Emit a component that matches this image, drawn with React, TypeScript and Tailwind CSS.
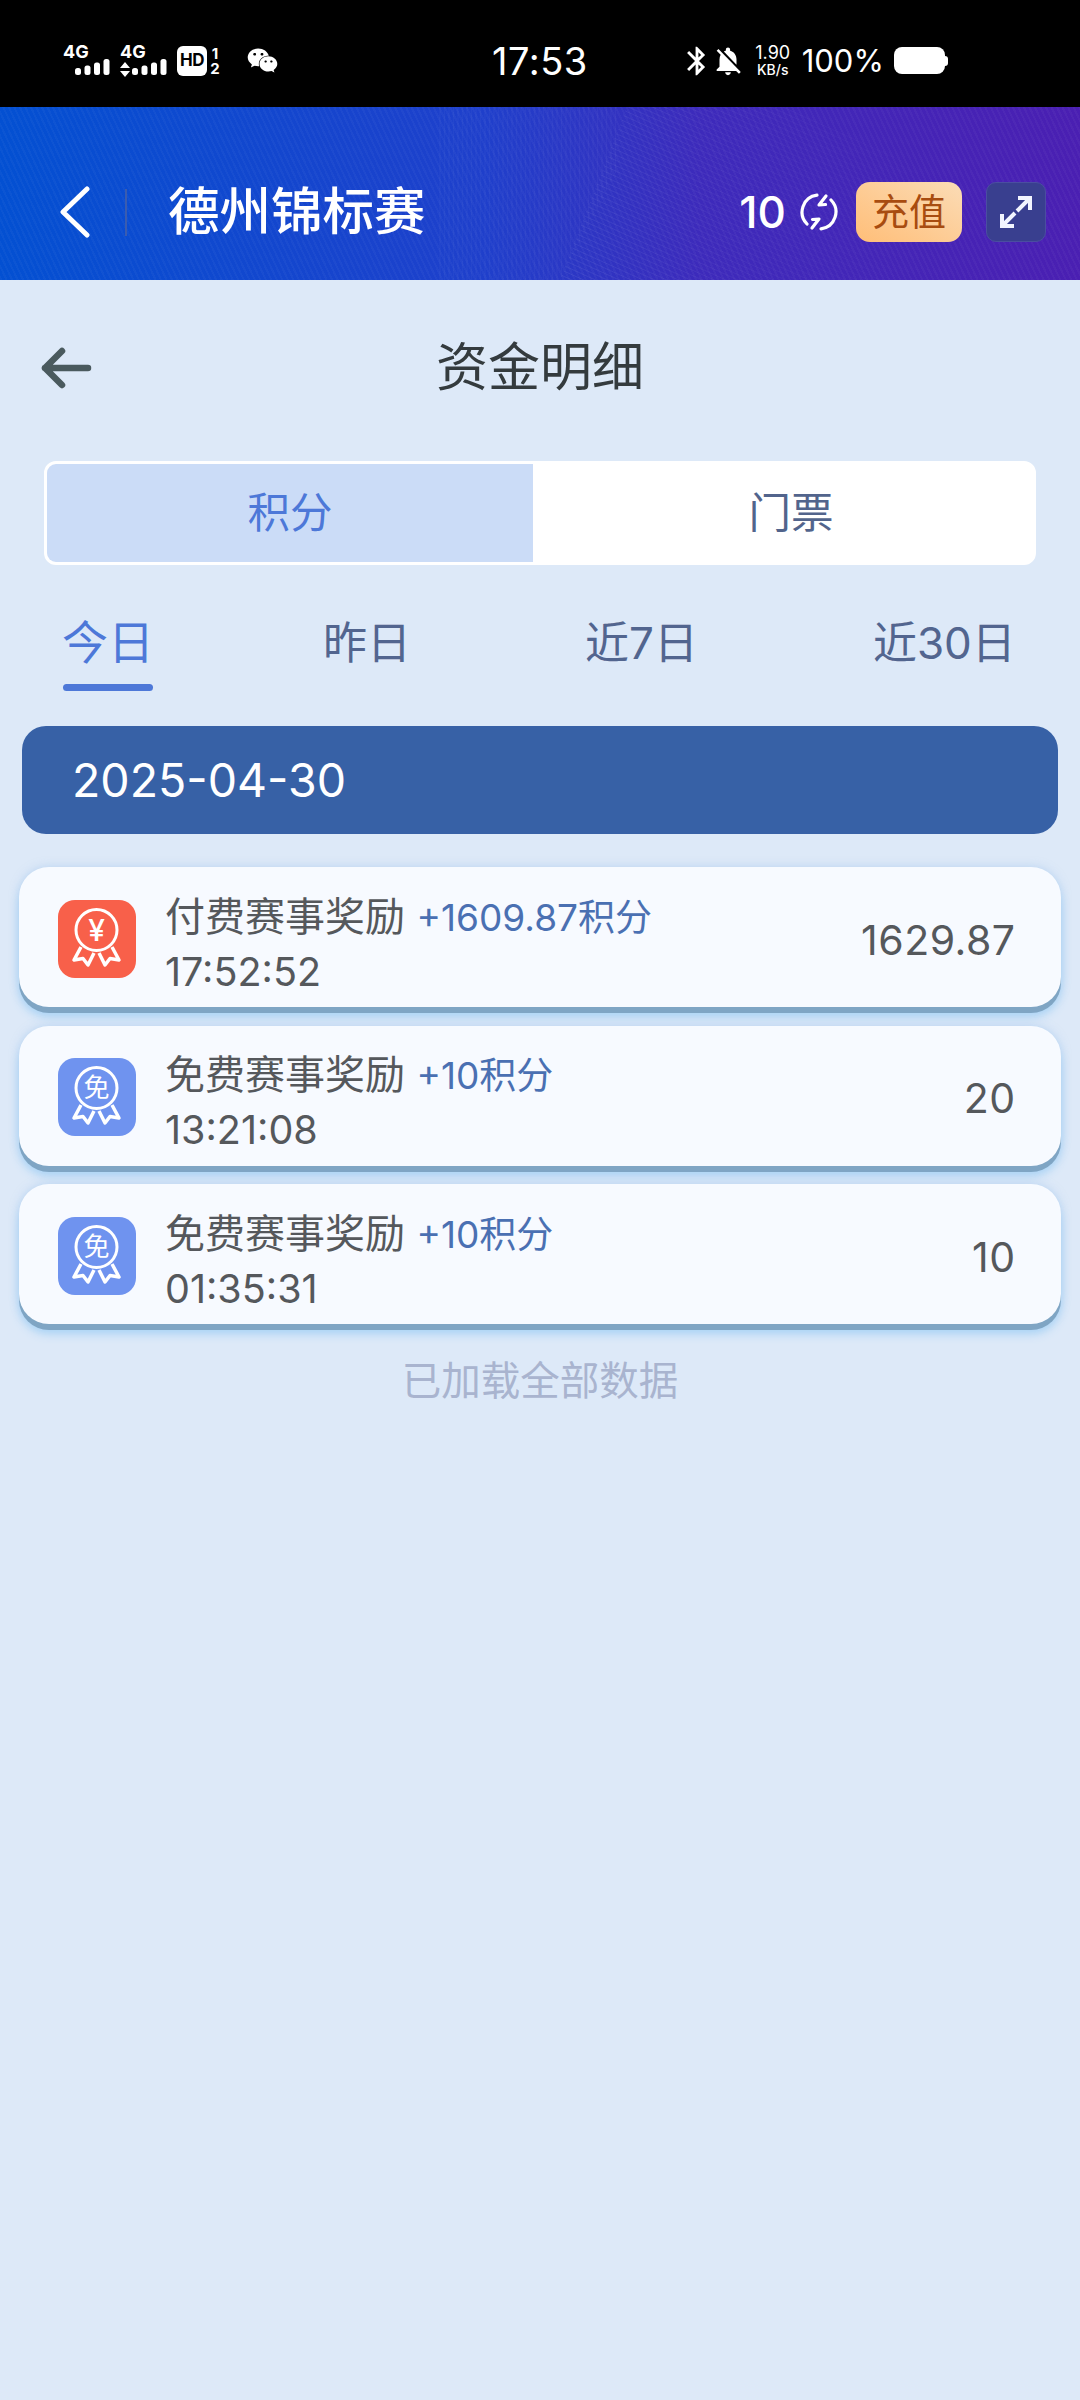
import React from 'react';
import { FaWeixin } from 'react-icons/fa';
import { MdNotificationsOff, MdBluetooth } from 'react-icons/md';

// Signal strength bars, shared by both SIM slots
const SignalBars: React.FC = () => (
  <svg width="35" height="16" viewBox="0 0 35 16" fill="white">
    <rect x="0" y="9" width="6" height="7" rx="2.5" />
    <rect x="9.5" y="6.5" width="6" height="9.5" rx="2.5" />
    <rect x="19" y="3.5" width="6" height="12.5" rx="2.5" />
    <rect x="28.5" y="0" width="6" height="16" rx="2.5" />
  </svg>
);

const StatusBar: React.FC = () => (
  <div className="flex h-[107px] items-center bg-black pt-[14px] text-white">
    <div className="flex w-[492px] items-center pl-[63px]">
      <div className="relative h-[32px] w-[47px]">
        <span className="absolute left-0 top-[-2px] text-[18px] font-bold leading-none">4G</span>
        <div className="absolute bottom-[2px] left-[12px]"><SignalBars /></div>
      </div>
      <div className="relative ml-[10px] h-[32px] w-[47px]">
        <span className="absolute left-0 top-[-2px] text-[18px] font-bold leading-none">4G</span>
        <svg className="absolute bottom-0 left-0" width="10" height="15" viewBox="0 0 10 15" fill="white">
          <path d="M5 0 L10 6 H0 Z M0 9 H10 L5 15 Z" />
        </svg>
        <div className="absolute bottom-[2px] left-[12px]"><SignalBars /></div>
      </div>
      <div className="ml-[10px] flex h-[30px] w-[30px] items-center justify-center rounded-[6px] bg-white text-[17px] font-bold leading-none tracking-[-0.5px] text-black">
        HD
      </div>
      <div className="ml-[3px] flex w-[10px] flex-col items-center text-[15px] font-bold leading-[15px]">
        <span>1</span>
        <span>2</span>
      </div>
      <FaWeixin className="ml-[27px]" size={31} />
    </div>
    <span className="text-[38px] leading-none tracking-[0.5px]">17:53</span>
    <div className="ml-[100px] flex items-center">
      <MdBluetooth size={34} className="ml-[-8px]" />
      <MdNotificationsOff size={34} className="ml-[-3px]" />
      <div className="ml-[8px] flex w-[40px] flex-col items-center leading-none">
        <span className="text-[18px]">1.90</span>
        <span className="mt-[1px] text-[14px] font-medium">KB/s</span>
      </div>
      <span className="ml-[9px] text-[31px] leading-none">100%</span>
      <div className="ml-[10px] flex items-center">
        <div className="h-[27px] w-[51px] rounded-[8px] bg-white" />
        <div className="h-[10px] w-[3px] rounded-r-[3px] bg-white" />
      </div>
    </div>
  </div>
);

// Two open arcs, each ending in a short inward tick
const RefreshIcon: React.FC = () => (
  <svg width="40" height="40" viewBox="0 0 40 40" fill="none" stroke="white" strokeWidth="3.2" strokeLinecap="round" strokeLinejoin="round">
    <path d="M8 32 A17 17 0 0 1 18 3.2" />
    <path d="M32 8 A17 17 0 0 1 22 36.8" />
    <path d="M27 4 L20 13 L26.5 12.5" />
    <path d="M13 36 L20 27 L13.5 27.5" />
  </svg>
);

const ExpandIcon: React.FC = () => (
  <svg width="36" height="36" viewBox="0 0 36 36" fill="none" stroke="#f2f4ff" strokeWidth="4" strokeLinecap="butt">
    <path d="M19 17 L31 5 M20 4 H32 V16" />
    <path d="M17 19 L5 31 M4 20 V32 H16" />
  </svg>
);

// Fine line fan behind the header's right half
const HeaderLines: React.FC = () => (
  <svg className="absolute inset-0" width="1080" height="173" viewBox="0 0 1080 173" fill="none">
    <defs>
      <linearGradient id="fanFade" x1="560" y1="0" x2="960" y2="0" gradientUnits="userSpaceOnUse">
        <stop offset="0" stopColor="white" stopOpacity="0.07" />
        <stop offset="1" stopColor="white" stopOpacity="0" />
      </linearGradient>
    </defs>
    {Array.from({ length: 52 }, (_, i) => {
      const t = i / 51;
      const x = 650 - 90 * t;
      const y = -60 + 233 * t;
      return <path key={i} d={`M${x} ${y} L${x + 420} ${y + 190}`} stroke="url(#fanFade)" strokeWidth="1" />;
    })}
    {Array.from({ length: 40 }, (_, i) => {
      const x = 440 + i * 4.5;
      const bottom = Math.min(173, (650 - x) * (173 / 90));
      return <path key={i} d={`M${x} 0 V${bottom}`} stroke="white" strokeOpacity="0.035" strokeWidth="1.5" />;
    })}
  </svg>
);

const AppHeader: React.FC = () => (
  <div className="relative flex h-[173px] items-center bg-[repeating-linear-gradient(65deg,rgba(255,255,255,0.03)_0px,rgba(255,255,255,0.03)_2px,rgba(255,255,255,0)_2px,rgba(255,255,255,0)_5px),linear-gradient(90deg,#0350d2_0%,#1f3fcb_45%,#3d2abb_65%,#4a1fb2_100%)] pt-[37px] text-white">
    <HeaderLines />
    <svg className="relative ml-[60px]" width="30" height="52" viewBox="0 0 30 52" fill="none" stroke="white" strokeWidth="5" strokeLinecap="round" strokeLinejoin="round">
      <path d="M27 3 L3 26 L27 49" />
    </svg>
    <div className="relative ml-[35px] h-[47px] w-[2px] bg-[#3a5cb0]" />
    <h1 className="relative ml-[41px] text-[51.5px] font-medium leading-none">德州锦标赛</h1>
    <span className="relative ml-auto text-[44px] font-medium leading-none">10</span>
    <div className="relative ml-[13px]"><RefreshIcon /></div>
    <button className="relative ml-[17px] flex h-[60px] w-[106px] items-center justify-center rounded-[14px] bg-[linear-gradient(30deg,#ffbe78,#fbdcb6)] text-[37px] leading-none text-[#a84c10]">
      充值
    </button>
    <button className="relative ml-[24px] mr-[34px] flex h-[60px] w-[60px] items-center justify-center rounded-[10px] border-[1.5px] border-[#4a4ea0] bg-[#393f8f]">
      <ExpandIcon />
    </button>
  </div>
);

const Rosette: React.FC<{ bg: string; mark: string; markSize: number; markWeight: number }> = ({ bg, mark, markSize, markWeight }) => (
  <svg width="78" height="78" viewBox="0 0 78 78" className="mt-[3px] shrink-0">
    <rect width="78" height="78" rx="17" fill={bg} />
    <circle cx="38.5" cy="30" r="20.5" fill="none" stroke="white" strokeWidth="3" />
    <path d="M23 47 L16 60 L25 58.5 L30 65 L36 53" fill="none" stroke="white" strokeWidth="3.5" strokeLinejoin="round" />
    <path d="M54 47 L61 60 L52 58.5 L47 65 L41 53" fill="none" stroke="white" strokeWidth="3.5" strokeLinejoin="round" />
    <text x="38.5" y={30 + markSize * 0.36} textAnchor="middle" fontSize={markSize} fontWeight={markWeight} fill="white">{mark}</text>
  </svg>
);

type Row = {
  title: string;
  gain: string;
  time: string;
  balance: string;
  paid: boolean;
};

const rows: Row[] = [
  { title: '付费赛事奖励', gain: '+1609.87积分', time: '17:52:52', balance: '1629.87', paid: true },
  { title: '免费赛事奖励', gain: '+10积分', time: '13:21:08', balance: '20', paid: false },
  { title: '免费赛事奖励', gain: '+10积分', time: '01:35:31', balance: '10', paid: false },
];

const RecordCard: React.FC<{ row: Row }> = ({ row }) => (
  <div className="flex h-[140px] items-center rounded-[30px] bg-[#f7faff] pl-[39px] pr-[45.5px] shadow-[0_6px_0_#7fa5c4,0_10px_10px_#a9d3f5,0_0_10px_rgba(150,190,235,0.5)]">
    {row.paid ? (
      <Rosette bg="#f8604a" mark="¥" markSize={30} markWeight={500} />
    ) : (
      <Rosette bg="#6f93ef" mark="免" markSize={26} markWeight={400} />
    )}
    <div className="ml-[29px] flex flex-col pt-[15px]">
      <div className="flex items-baseline leading-none">
        <span className="text-[40px] leading-none text-[#55585c]">{row.title}</span>
        <span className="ml-[11.5px] text-[37px] leading-none text-[#4a70b2]">{row.gain}</span>
      </div>
      <span className="mt-[16px] text-[39.5px] leading-none text-[#55585c]">{row.time}</span>
    </div>
    <span className="ml-auto pt-[6px] text-[41px] leading-none tracking-[0.5px] text-[#55585c]">{row.balance}</span>
  </div>
);

const App: React.FC = () => {
  return (
    <div className="flex h-[2400px] w-[1080px] flex-col overflow-hidden bg-[#dde9f8] font-['Inter','Noto_Sans_CJK_SC',sans-serif]">
      <StatusBar />
      <AppHeader />

      {/* Page title row */}
      <div className="relative flex h-[176px] items-center justify-center">
        <svg className="absolute left-[40px] top-[67px]" width="52" height="42" viewBox="0 0 52 42" fill="none" stroke="#4a5a5e" strokeWidth="6.5" strokeLinecap="round" strokeLinejoin="round">
          <path d="M48 21 H5 M22 4 L5 21 L22 38" />
        </svg>
        <h2 className="text-[52px] leading-none text-[#343b3e]">资金明细</h2>
      </div>

      {/* Points / tickets switch */}
      <div className="ml-[44px] mt-[5px] flex h-[104px] w-[992px] overflow-hidden rounded-[12px] border-[3px] border-white bg-white">
        <div className="flex w-[486px] items-center justify-center bg-[#cbdcf7] text-[42.5px] leading-none text-[#4d78d8]">积分</div>
        <div className="flex flex-1 items-center justify-center pl-[16px] text-[42.5px] leading-none text-[#52648c]">门票</div>
      </div>

      {/* Date range filter */}
      <div className="ml-[63px] mt-[56px] flex items-start text-[44px] leading-none text-[#52658f]">
        <div className="flex w-[90px] flex-col items-center text-[#4d78d8]">
          <span className="mt-[-2px] whitespace-nowrap text-[46px]">今日</span>
          <div className="mt-[19px] h-[7px] w-[90px] rounded-full bg-[#4d78d8]" />
        </div>
        <span className="ml-[170px]">昨日</span>
        <span className="ml-[174px]">近7日</span>
        <span className="ml-[175px]">近30日</span>
      </div>

      <div className="mx-[22px] mt-[35px] flex h-[108px] items-center rounded-[24px] bg-[#3761a6] pl-[50px] text-[46.5px] leading-none text-white">
        2025-04-30
      </div>

      <div className="mx-[19px] mt-[33px] flex flex-col gap-[18.5px]">
        {rows.map((row) => (
          <RecordCard key={row.time} row={row} />
        ))}
      </div>

      <p className="mt-[38px] text-center text-[39.5px] leading-none text-[#a9b4cf]">已加载全部数据</p>
    </div>
  );
};

export default App;
